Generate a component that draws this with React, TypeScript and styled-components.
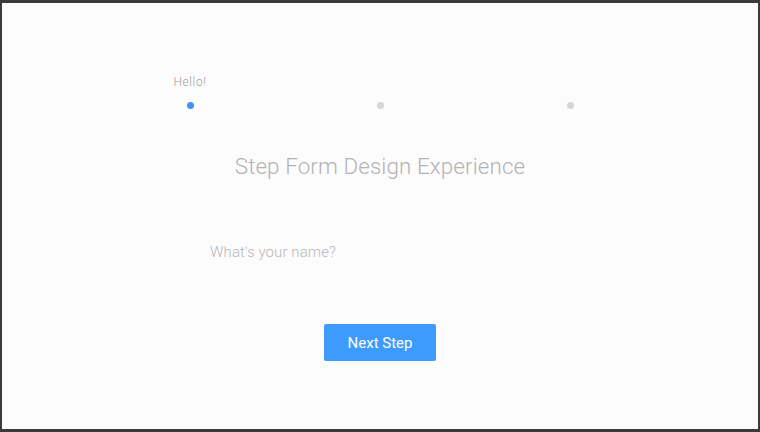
import styled, { createGlobalStyle } from "styled-components";

const Global = createGlobalStyle`
  html, body {
    margin: 0;
    padding: 0;
    background: #3b3b3b;
  }
  * {
    box-sizing: border-box;
  }
`;

const Frame = styled.div`
  width: 760px;
  height: 432px;
  border-style: solid;
  border-color: #3b3b3b;
  border-width: 3px 2px 3px 2px;
  background: #fcfcfc;
  display: flex;
  flex-direction: column;
  align-items: center;
  padding-top: 71px;
  font-family: Roboto, "Liberation Sans", sans-serif;
`;

const Steps = styled.div`
  display: grid;
  grid-template-columns: repeat(3, 40px);
  column-gap: 150px;
`;

const Step = styled.div`
  display: flex;
  flex-direction: column;
  align-items: center;
`;

const StepLabel = styled.span`
  height: 16px;
  font-size: 12px;
  font-weight: 300;
  line-height: 16px;
  color: #9e9e9e;
  letter-spacing: 0.6px;
`;

const Dot = styled.span<{ $active?: boolean }>`
  width: 7px;
  height: 7px;
  margin-top: 12px;
  border-radius: 50%;
  background: ${(p) => (p.$active ? "#3f92f2" : "#d6d6d6")};
`;

const Title = styled.h1`
  margin: 44px 0 0;
  font-size: 22.4px;
  font-weight: 300;
  line-height: 26px;
  color: #b3b3b5;
  letter-spacing: 0.1px;
`;

const NameInput = styled.input`
  margin-top: 61px;
  width: 340px;
  height: 24px;
  padding: 0;
  border: none;
  outline: none;
  background: transparent;
  font-family: Roboto, "Liberation Sans", sans-serif;
  font-size: 15px;
  font-weight: 300;
  color: #555;
  letter-spacing: 0.1px;
  &::placeholder {
    color: #b8b8b8;
  }
`;

const NextButton = styled.button`
  margin-top: 60px;
  width: 112px;
  height: 37px;
  border: none;
  border-radius: 2px;
  background: #3c9bfd;
  color: #fff;
  font-family: Roboto, "Liberation Sans", sans-serif;
  font-size: 15px;
  cursor: pointer;
`;

const steps = ["Hello!", "", ""];

export default function App() {
  return (
    <>
      <Global />
      <Frame>
        <Steps>
          {steps.map((label, i) => (
            <Step key={i}>
              <StepLabel>{label}</StepLabel>
              <Dot $active={i === 0} />
            </Step>
          ))}
        </Steps>
        <Title>Step Form Design Experience</Title>
        <NameInput placeholder="What's your name?" />
        <NextButton>Next Step</NextButton>
      </Frame>
    </>
  );
}
